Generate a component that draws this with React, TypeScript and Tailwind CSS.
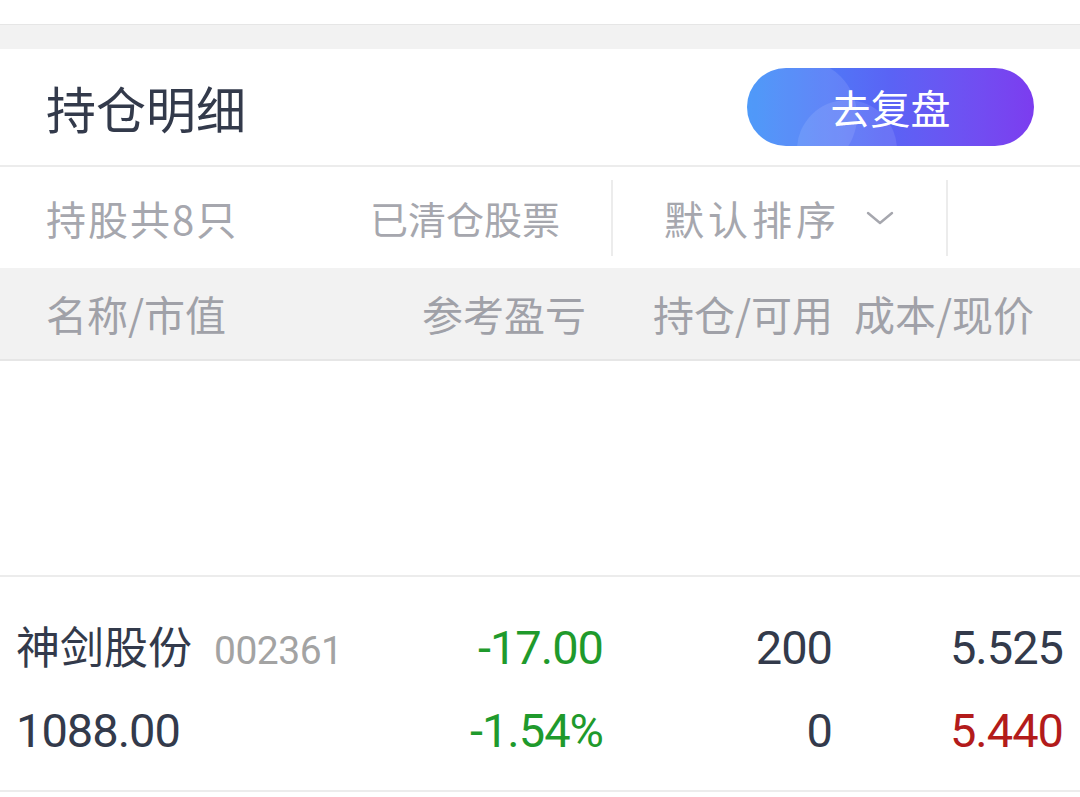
import * as React from "react";

const cjk = { fontFamily: '"Noto Sans CJK SC", "Noto Sans", sans-serif' };
const num = { fontFamily: 'Roboto, "Noto Sans CJK SC", sans-serif' };

function ReviewButton() {
    return (
        <button className="relative w-[287px] h-[78px] rounded-full overflow-hidden bg-gradient-to-r from-[#3a8ff8] via-[#5a63f5] to-[#7c3cef] flex items-center justify-center">
            <span className="absolute -left-[12px] -top-[8px] w-[122px] h-[112px] rounded-full bg-white/10"></span>
            <span className="absolute left-[50px] top-[32px] w-[100px] h-[100px] rounded-full bg-white/10"></span>
            <span className="relative text-white text-[40px] leading-none" style={cjk}>去复盘</span>
        </button>
    );
}

export default function App() {
    return (
        <div className="w-[1080px] h-[797px] bg-white overflow-hidden" style={cjk}>
            <div className="h-[25px] border-b border-[#e6e6e6]"></div>
            <div className="h-[24px] bg-[#f2f2f2]"></div>

            <div className="h-[118px] flex items-center justify-between pl-[46px] pr-[46px] border-b-2 border-[#ececec]">
                <h1 className="text-[50px] leading-none text-[#333a4b]">持仓明细</h1>
                <ReviewButton />
            </div>

            <div className="h-[101px] flex items-center text-[#a6a7ae] leading-none">
                <div className="pl-[46px] w-[370px] text-[40px] tracking-[2px]">持股共8只</div>
                <div className="w-[241px] text-[38px]">已清仓股票</div>
                <div className="h-[76px] w-[2px] bg-[#ececec]"></div>
                <div className="w-[333px] pl-[51px] flex items-center">
                    <span className="text-[40px] tracking-[4px]">默认排序</span>
                    <svg className="ml-[26px]" width="28" height="14" viewBox="0 0 28 14" fill="none">
                        <path d="M2 2 L14 12 L26 2" stroke="#a6a7ae" strokeWidth="2.4" strokeLinecap="round" strokeLinejoin="round" />
                    </svg>
                </div>
                <div className="h-[76px] w-[2px] bg-[#ececec]"></div>
            </div>

            <div className="h-[93px] bg-[#f2f2f2] border-b-2 border-[#e6e6e6] flex items-center text-[41px] text-[#a0a1a8] leading-none">
                <div className="pl-[46px] w-[380px]">名称/市值</div>
                <div className="w-[206px] text-right">参考盈亏</div>
                <div className="w-[247px] text-right">持仓/可用</div>
                <div className="w-[201px] text-right">成本/现价</div>
            </div>

            <div className="h-[216px] border-b-2 border-[#ececec]"></div>

            <div className="h-[215px] border-b-2 border-[#ececec] flex flex-col justify-center gap-[36px] pt-[10px] text-[#333a4b]">
                <div className="flex items-baseline leading-none">
                    <div className="w-[400px] pl-[16px] flex items-baseline">
                        <span className="text-[44px]">神剑股份</span>
                        <span className="ml-[22px] text-[39px] text-[#a3a3a3] tracking-[-0.5px]" style={num}>002361</span>
                    </div>
                    <div className="w-[203px] text-right text-[47px] tracking-[-1px] text-[#1f9a2c]" style={num}>-17.00</div>
                    <div className="w-[229px] text-right text-[47px] tracking-[-1px]" style={num}>200</div>
                    <div className="w-[231px] text-right text-[47px] tracking-[-1px]" style={num}>5.525</div>
                </div>
                <div className="flex items-baseline leading-none">
                    <div className="w-[400px] pl-[16px] text-[47px] tracking-[-1px]" style={num}>1088.00</div>
                    <div className="w-[203px] text-right text-[47px] tracking-[-1px] text-[#1f9a2c]" style={num}>-1.54%</div>
                    <div className="w-[229px] text-right text-[47px] tracking-[-1px]" style={num}>0</div>
                    <div className="w-[231px] text-right text-[47px] tracking-[-1px] text-[#b31b1b]" style={num}>5.440</div>
                </div>
            </div>
        </div>
    );
}
